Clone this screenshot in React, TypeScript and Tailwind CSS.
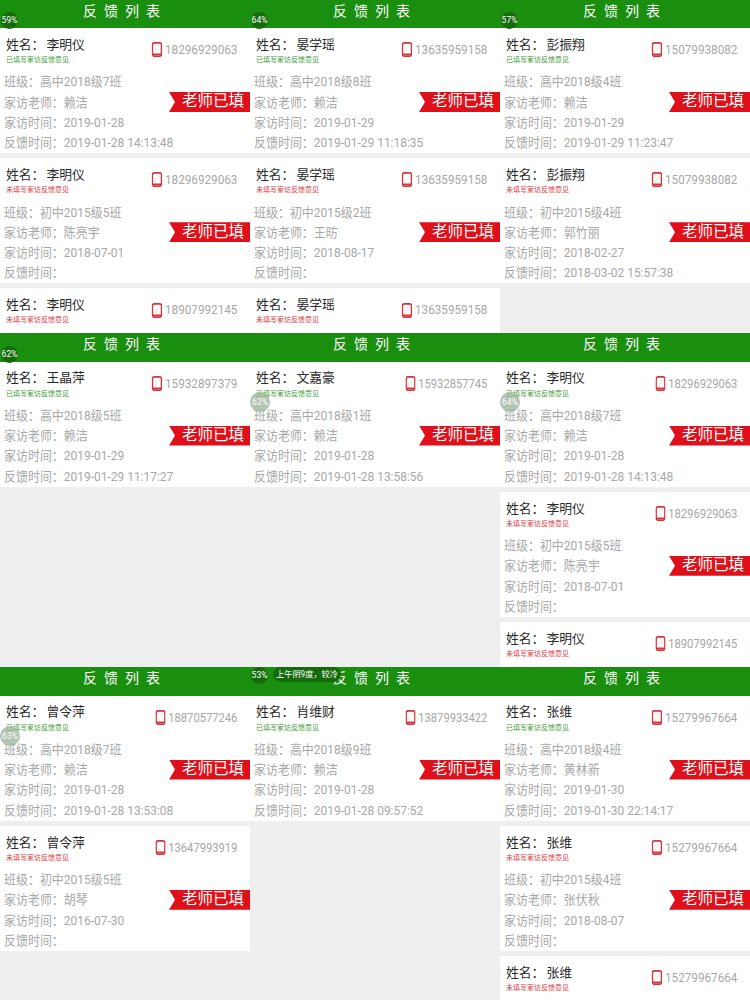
const FONT = "font-['Roboto','Noto_Sans_CJK_SC',sans-serif]";

type Item = {
  name: string;
  phone: string;
  filled: boolean;
  grade?: string;
  teacher?: string;
  visit?: string;
  feedback?: string;
  narrow?: boolean;
};

type Panel = {
  items: Item[];
  badge?: React.ReactNode;
};

function PhoneIcon() {
  return (
    <svg width="12" height="15" viewBox="0 0 12 15" className="shrink-0">
      <rect x="1" y="0.9" width="10" height="13.2" rx="2" fill="none" stroke="#d8353a" strokeWidth="1.6" />
      <path d="M9.5 2.5 3 11" stroke="#f8dfe0" strokeWidth="1" />
      <path d="M1.5 12.2h9" stroke="#d8353a" strokeWidth="1.4" />
    </svg>
  );
}

function Row({ label, value }: { label: string; value?: string }) {
  return (
    <div className="ml-[4px] flex h-[20.3px] origin-left scale-x-[.92] items-center whitespace-nowrap text-[13px] text-[#a8a8a8]">
      <span>{label}：</span>
      {value ? <span>{value}</span> : null}
    </div>
  );
}

function Card({ item }: { item: Item }) {
  const hasDetail = item.grade != null;
  return (
    <div className="relative mb-[5px] min-h-[125px] bg-white pt-[8px]">
      <div className="flex items-start justify-between pr-[13px]">
        <div className="pl-[6px]">
          <div className="flex h-[17px] items-center whitespace-nowrap text-[12.8px] text-[#2a2a2a]">
            <span>姓名：</span>
            <span className="ml-[2px]">{item.name}</span>
          </div>
          <div className={`mt-[2px] h-[10px] whitespace-nowrap text-[7px] leading-[10px] ${item.filled ? "text-[#3c9c37]" : "text-[#e0383d]"}`}>
            {item.filled ? "已填写家访反馈意见" : "未填写家访反馈意见"}
          </div>
        </div>
        <div className={`mt-[4px] flex origin-right items-center gap-[3px] ${item.narrow ? "scale-x-[.86]" : "scale-x-[.9]"}`}>
          <PhoneIcon />
          <span className="text-[13px] text-[#a8a8a8]">{item.phone}</span>
        </div>
      </div>
      {hasDetail ? (
        <div className="mt-[7px]">
          <Row label="班级" value={item.grade} />
          <Row label="家访老师" value={item.teacher} />
          <Row label="家访时间" value={item.visit} />
          <Row label="反馈时间" value={item.feedback} />
          <div className="absolute right-0 top-[64px] flex h-[20px] w-[81px] items-center justify-end bg-[#e0101a] pr-[6px] text-[15.5px] text-white [clip-path:polygon(0_0,100%_0,100%_100%,0_100%,6px_50%)]">
            老师已填
          </div>
        </div>
      ) : null}
    </div>
  );
}

function Dot({ text, className }: { text: string; className: string }) {
  return (
    <div className={`absolute flex items-center justify-center rounded-full text-[8.5px] text-white ${className}`}>
      {text}
    </div>
  );
}

const darkDot = "h-[17px] w-[17px] bg-[#156b0c]";
const greyDot = "h-[20px] w-[20px] bg-[#9fb59f]/80";

function ListPanel({ panel, top }: { panel: Panel; top: number }) {
  return (
    <div className="relative h-full overflow-hidden">
      <div className={`flex items-center justify-center bg-[#1a8f0f] text-[14px] tracking-[7px] text-white ${top === 0 ? "h-[28px] pb-[6px]" : "h-[28.5px] pb-[6px]"}`}>
        反馈列表
      </div>
      {panel.items.map((item, i) => (
        <Card key={i} item={item} />
      ))}
      {panel.badge}
    </div>
  );
}

const rows: Panel[][] = [
  [
    {
      badge: <Dot text="59%" className={`left-[1px] top-[12px] ${darkDot}`} />,
      items: [
        { name: "李明仪", phone: "18296929063", filled: true, grade: "高中2018级7班", teacher: "赖洁", visit: "2019-01-28", feedback: "2019-01-28 14:13:48" },
        { name: "李明仪", phone: "18296929063", filled: false, grade: "初中2015级5班", teacher: "陈亮宇", visit: "2018-07-01", feedback: "" },
        { name: "李明仪", phone: "18907992145", filled: false },
      ],
    },
    {
      badge: <Dot text="64%" className={`left-[1px] top-[12px] ${darkDot}`} />,
      items: [
        { name: "晏学瑶", phone: "13635959158", filled: true, grade: "高中2018级8班", teacher: "赖洁", visit: "2019-01-29", feedback: "2019-01-29 11:18:35" },
        { name: "晏学瑶", phone: "13635959158", filled: false, grade: "初中2015级2班", teacher: "王昉", visit: "2018-08-17", feedback: "" },
        { name: "晏学瑶", phone: "13635959158", filled: false },
      ],
    },
    {
      badge: <Dot text="57%" className={`left-[1px] top-[12px] ${darkDot}`} />,
      items: [
        { name: "彭振翔", phone: "15079938082", filled: true, grade: "高中2018级4班", teacher: "赖洁", visit: "2019-01-29", feedback: "2019-01-29 11:23:47" },
        { name: "彭振翔", phone: "15079938082", filled: false, grade: "初中2015级4班", teacher: "郭竹丽", visit: "2018-02-27", feedback: "2018-03-02 15:57:38" },
      ],
    },
  ],
  [
    {
      badge: <Dot text="62%" className={`left-[1px] top-[13px] ${darkDot}`} />,
      items: [
        { name: "王晶萍", phone: "15932897379", filled: true, grade: "高中2018级5班", teacher: "赖洁", visit: "2019-01-29", feedback: "2019-01-29 11:17:27" },
      ],
    },
    {
      badge: <Dot text="62%" className={`left-0 top-[59px] ${greyDot}`} />,
      items: [
        { name: "文嘉豪", phone: "15932857745", filled: true, narrow: true, grade: "高中2018级1班", teacher: "赖洁", visit: "2019-01-28", feedback: "2019-01-28 13:58:56" },
      ],
    },
    {
      badge: <Dot text="64%" className={`left-0 top-[59px] ${greyDot}`} />,
      items: [
        { name: "李明仪", phone: "18296929063", filled: true, narrow: true, grade: "高中2018级7班", teacher: "赖洁", visit: "2019-01-28", feedback: "2019-01-28 14:13:48" },
        { name: "李明仪", phone: "18296929063", filled: false, narrow: true, grade: "初中2015级5班", teacher: "陈亮宇", visit: "2018-07-01", feedback: "" },
        { name: "李明仪", phone: "18907992145", filled: false, narrow: true },
      ],
    },
  ],
  [
    {
      badge: <Dot text="63%" className={`left-0 top-[59px] ${greyDot}`} />,
      items: [
        { name: "曾令萍", phone: "18870577246", filled: true, narrow: true, grade: "高中2018级7班", teacher: "赖洁", visit: "2019-01-28", feedback: "2019-01-28 13:53:08" },
        { name: "曾令萍", phone: "13647993919", filled: false, narrow: true, grade: "初中2015级5班", teacher: "胡琴", visit: "2016-07-30", feedback: "" },
      ],
    },
    {
      badge: (
        <>
          <Dot text="53%" className={`left-[1px] top-0 ${darkDot}`} />
          <div className="absolute left-[23px] top-0 flex h-[15px] w-[68px] items-center justify-center rounded-full bg-[#156b0c] text-[8.2px] text-white">
            上午阴9度，较冷
          </div>
        </>
      ),
      items: [
        { name: "肖维财", phone: "13879933422", filled: true, narrow: true, grade: "高中2018级9班", teacher: "赖洁", visit: "2019-01-28", feedback: "2019-01-28 09:57:52" },
      ],
    },
    {
      items: [
        { name: "张维", phone: "15279967664", filled: true, grade: "高中2018级4班", teacher: "黄林新", visit: "2019-01-30", feedback: "2019-01-30 22:14:17" },
        { name: "张维", phone: "15279967664", filled: false, grade: "初中2015级4班", teacher: "张伏秋", visit: "2018-08-07", feedback: "" },
        { name: "张维", phone: "15279967664", filled: false },
      ],
    },
  ],
];

const rowHeights = ["h-[333px]", "h-[334px]", "h-[333px]"];

export default function App() {
  return (
    <div className={`h-[1000px] w-[750px] overflow-hidden bg-[#efefef] ${FONT}`}>
      {rows.map((panels, r) => (
        <div key={r} className={`grid grid-cols-3 ${rowHeights[r]}`}>
          {panels.map((panel, c) => (
            <ListPanel key={c} panel={panel} top={r} />
          ))}
        </div>
      ))}
    </div>
  );
}
